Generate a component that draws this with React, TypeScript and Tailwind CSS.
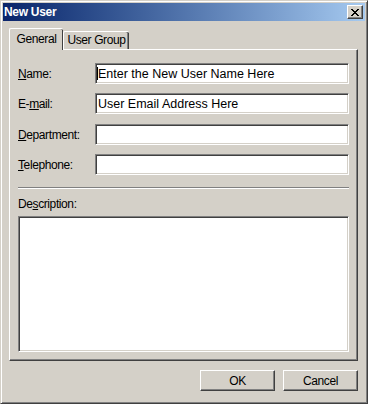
import React from "react"

const face = "bg-[#d4d0c8]"
const uiFont = "font-['Liberation_Sans',Arial,sans-serif]"
const label = "text-[12px] leading-[14px] tracking-[-0.4px] whitespace-nowrap"

function CloseGlyph() {
    // classic 8x7 pixel cross
    const rows = ["11000011", "01100110", "00111100", "00011000", "00111100", "01100110", "11000011"]
    return (
        <svg width="8" height="7" viewBox="0 0 8 7" shapeRendering="crispEdges">
            {rows.map((row, y) =>
                row.split("").map((c, x) => (c === "1" ? <rect key={`${x}-${y}`} x={x} y={y} width="1" height="1" fill="#000" /> : null))
            )}
        </svg>
    )
}

function Field({ text, value, caret }: { text: React.ReactNode; value?: string; caret?: boolean }) {
    return (
        <div className="flex h-[21px] items-center">
            <span className={`w-[77px] ${label}`}>{text}</span>
            <div className="flex h-[21px] flex-1 items-center border border-t-[#808080] border-l-[#808080] border-r-white border-b-white bg-white pl-[2px] shadow-[inset_1px_1px_#404040,inset_-1px_-1px_#d4d0c8]">
                {caret && <span className="-ml-[1px] h-[13px] w-px bg-black" />}
                <span className="text-[12.5px] leading-[14px] whitespace-nowrap">{value}</span>
            </div>
        </div>
    )
}

export default function App() {
    return (
        <div className={`h-[404px] w-[368px] ${face} ${uiFont} text-black select-none`}>
            <div className="flex h-full w-full flex-col border border-t-[#d4d0c8] border-l-[#d4d0c8] border-r-[#404040] border-b-[#404040] p-[1px] shadow-[inset_1px_1px_#fff,inset_-1px_-1px_#808080]">
                {/* title bar */}
                <div className="mx-[1px] mt-[1px] flex h-[18px] items-center justify-between bg-linear-to-r from-[#0a246a] to-[#a6caf0] pr-[2px] pl-[1px]">
                    <span className="text-[12px] font-bold tracking-[-0.3px] text-white">New User</span>
                    <button className="flex h-[14px] w-[16px] items-center justify-center border border-t-white border-l-white border-r-[#404040] border-b-[#404040] bg-[#d4d0c8] pt-[1px] shadow-[inset_-1px_-1px_#808080]">
                        <CloseGlyph />
                    </button>
                </div>

                <div className="flex flex-1 flex-col pr-[8px] pl-[7px]">
                    {/* tabs */}
                    <div className="mt-[7px] flex h-[21px] items-end">
                        <div className={`relative z-10 -mb-px flex h-[22px] w-[54px] items-center justify-center rounded-t-[2px] border-t border-l border-t-white border-l-white bg-[#d4d0c8] pb-[2px] shadow-[inset_-1px_0_#404040] ${label}`}>
                            General
                        </div>
                        <div className={`flex h-[18px] w-[66px] items-center justify-center rounded-t-[2px] border-t border-l border-t-white border-l-white pb-[1px] shadow-[inset_-1px_0_#404040,inset_-2px_0_#808080] ${label}`}>
                            User Group
                        </div>
                    </div>

                    {/* panel */}
                    <div className="flex flex-col border border-t-white border-l-white border-r-[#404040] border-b-[#404040] pt-[13px] pr-[8px] pb-[8px] pl-[8px] shadow-[inset_-1px_-1px_#808080]">
                        <Field text={<><u>N</u>ame:</>} value="Enter the New User Name Here" caret />
                        <div className="mt-[9px]">
                            <Field text={<>E-<u>m</u>ail:</>} value="User Email Address Here" />
                        </div>
                        <div className="mt-[10px]">
                            <Field text={<><u>D</u>epartment:</>} />
                        </div>
                        <div className="mt-[9px]">
                            <Field text={<><u>T</u>elephone:</>} />
                        </div>

                        <div className="mt-[12px] h-[2px] border-t border-b border-t-[#808080] border-b-white" />

                        <div className={`mt-[8px] h-[14px] ${label}`}>
                            De<u>s</u>cription:
                        </div>
                        <div className="mt-[5px] h-[136px] border border-t-[#808080] border-l-[#808080] border-r-white border-b-white bg-white shadow-[inset_1px_1px_#404040,inset_-1px_-1px_#d4d0c8]" />
                    </div>

                    {/* buttons */}
                    <div className="mt-[9px] flex justify-end gap-[8px]">
                        <button className={`flex h-[21px] w-[75px] items-center justify-center border border-t-white border-l-white border-r-[#404040] border-b-[#404040] bg-[#d4d0c8] shadow-[inset_-1px_-1px_#808080] ${label}`}>
                            OK
                        </button>
                        <button className={`flex h-[21px] w-[75px] items-center justify-center border border-t-white border-l-white border-r-[#404040] border-b-[#404040] bg-[#d4d0c8] shadow-[inset_-1px_-1px_#808080] ${label}`}>
                            Cancel
                        </button>
                    </div>
                </div>
            </div>
        </div>
    )
}
